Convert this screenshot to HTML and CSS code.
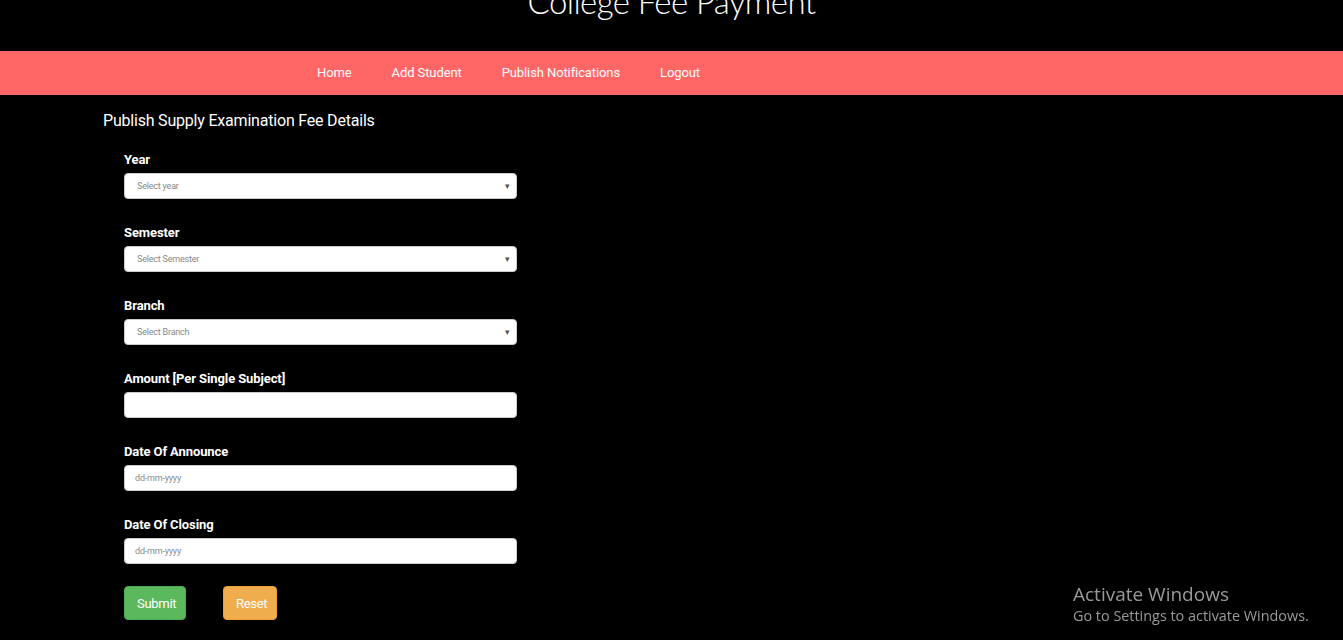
FILE: index.html
```html
<!DOCTYPE html>
<html>
<head>
<meta charset="utf-8">
<title>College Fee Payment</title>
<link rel="stylesheet" href="styles.css">
</head>
<body>
<header class="top">
  <h1 class="title">College Fee Payment</h1>
</header>
<nav class="navbar">
  <ul class="nav-list">
    <li><a class="nav-link" href="#">Home</a></li>
    <li><a class="nav-link" href="#">Add Student</a></li>
    <li><a class="nav-link" href="#">Publish Notifications</a></li>
    <li><a class="nav-link" href="#">Logout</a></li>
  </ul>
</nav>
<main class="container">
  <h2 class="page-heading">Publish Supply Examination Fee Details</h2>
  <form class="fee-form">
    <div class="field">
      <label class="field-label">Year</label>
      <div class="control select-control"><span class="placeholder">Select year</span><span class="caret">▾</span></div>
    </div>
    <div class="field">
      <label class="field-label">Semester</label>
      <div class="control select-control"><span class="placeholder">Select Semester</span><span class="caret">▾</span></div>
    </div>
    <div class="field">
      <label class="field-label">Branch</label>
      <div class="control select-control"><span class="placeholder">Select Branch</span><span class="caret">▾</span></div>
    </div>
    <div class="field">
      <label class="field-label">Amount [Per Single Subject]</label>
      <div class="control"></div>
    </div>
    <div class="field">
      <label class="field-label">Date Of Announce</label>
      <div class="control date-control"><span class="placeholder">dd-mm-yyyy</span></div>
    </div>
    <div class="field">
      <label class="field-label">Date Of Closing</label>
      <div class="control date-control"><span class="placeholder">dd-mm-yyyy</span></div>
    </div>
    <div class="actions">
      <button type="button" class="btn btn-submit">Submit</button>
      <button type="button" class="btn btn-reset">Reset</button>
    </div>
  </form>
</main>
<div class="activate">
  <div class="activate-title">Activate Windows</div>
  <div class="activate-sub">Go to Settings to activate Windows.</div>
</div>
</body>
</html>
```

FILE: styles.css
```css
html, body {
  margin: 0;
  padding: 0;
  background: #000;
  height: 100%;
  overflow: hidden;
}
body {
  font-family: "Roboto", "Liberation Sans", sans-serif;
  color: #fff;
}
.top {
  height: 51px;
  overflow: hidden;
  display: flex;
  justify-content: center;
}
.title {
  margin: -15px 0 0;
  font-family: "Lato", "Roboto", sans-serif;
  font-weight: 300;
  font-size: 33px;
  line-height: 33px;
  color: #fff;
  letter-spacing: -0.6px;
}
.navbar {
  background: #ff6666;
  height: 44px;
}
.nav-list {
  list-style: none;
  margin: 0;
  padding: 0 0 0 297px;
  display: flex;
  height: 100%;
}
.nav-link {
  display: block;
  padding: 0 20px;
  line-height: 44px;
  font-size: 13px;
  letter-spacing: -0.1px;
  color: #fff;
  text-decoration: none;
}
.container {
  padding: 0 0 0 103px;
}
.page-heading {
  margin: 0;
  padding-top: 16px;
  font-size: 16px;
  font-weight: 400;
  line-height: 20px;
  letter-spacing: -0.2px;
}
.fee-form {
  padding: 15px 0 0 21px;
  width: 393px;
  display: flex;
  flex-direction: column;
  gap: 20px;
}
.field {
  display: flex;
  flex-direction: column;
  gap: 3px;
}
.field-label {
  padding-top: 3px;
  font-size: 13px;
  font-weight: 700;
  line-height: 21px;
  letter-spacing: -0.1px;
}
.control {
  height: 26px;
  background: #fff;
  border: 1px solid #ccc;
  border-radius: 4px;
  box-sizing: border-box;
  display: flex;
  align-items: center;
}
.select-control {
  padding: 0 6px 0 12px;
  justify-content: space-between;
}
.date-control {
  padding: 0 10px;
}
.placeholder {
  font-size: 9px;
  color: #888;
  letter-spacing: -0.2px;
}
.caret {
  font-size: 9px;
  color: #555;
}
.actions {
  display: flex;
  gap: 37px;
  margin-top: 2px;
}
.btn {
  height: 34px;
  border: 1px solid transparent;
  border-radius: 4px;
  color: #fff;
  font-family: "Roboto", "Liberation Sans", sans-serif;
  font-size: 13px;
  padding: 0 12px;
  letter-spacing: -0.3px;
}
.btn-submit {
  background: #5cb85c;
  border-color: #4cae4c;
  width: 62px;
}
.btn-reset {
  background: #f0ad4e;
  border-color: #eea236;
  width: 54px;
}
.activate {
  position: fixed;
  left: 1073px;
  top: 582px;
  color: #9a9a9a;
  font-family: "Open Sans", "Noto Sans", sans-serif;
}
.activate-title {
  font-size: 19px;
  line-height: 24px;
}
.activate-sub {
  font-size: 14.4px;
  line-height: 20px;
}
```
